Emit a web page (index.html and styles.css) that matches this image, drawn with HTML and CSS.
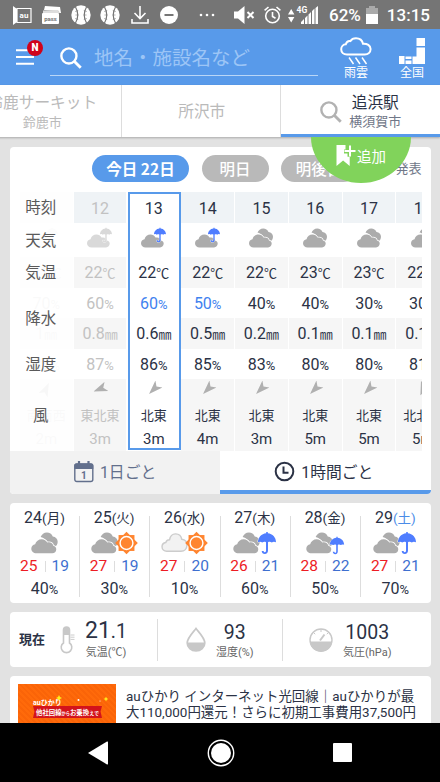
FILE: index.html
```
<!DOCTYPE html>
<html lang="ja">
<head>
    <meta charset="UTF-8">
    <meta name="viewport" content="width=device-width, initial-scale=1.0">
    <title>天気 - 追浜駅</title>
    <link rel="stylesheet" href="styles.css">
</head>
<body>
    <!-- アイコン定義 -->
    <svg class="defs" width="0" height="0">
        <symbol id="cloud" viewBox="0 0 24 20">
            <path d="M4.6 19.4C2 19.4 0 17.6 0 15.2c0-2 1.5-3.7 3.5-4C4.2 8.4 6.6 6.6 9.5 6.6c2.2 0 4 1.2 5 3 .5-.2 1-.2 1.5-.2 2 0 3.6 1.2 4 3 1.6.3 2.7 1.5 2.7 3.2 0 2.2-1.6 3.8-3.6 3.8z"/>
        </symbol>
        <symbol id="clouds" viewBox="0 0 24 20">
            <path d="M8.5 4.6C9.5 2 11.5.4 14.2.4c2.4 0 4.5 1.4 5.3 3.6 2.6.3 4.5 2.2 4.5 4.8 0 2.3-1.2 4-2.6 4.6-1-1.6-2-2.4-3.4-2.8-2-1.4-2.6-1.1-3-1.2-1.5-2.4-3.6-4.2-6.5-4.8z"/>
            <path stroke="#fff" stroke-width="1.4" paint-order="stroke" d="M4.6 19.4C2 19.4 0 17.6 0 15.2c0-2 1.5-3.7 3.5-4C4.2 8.4 6.6 6.6 9.5 6.6c2.2 0 4 1.2 5 3 .5-.2 1-.2 1.5-.2 2 0 3.6 1.2 4 3 1.6.3 2.7 1.5 2.7 3.2 0 2.2-1.6 3.8-3.6 3.8z"/>
        </symbol>
        <symbol id="outline" viewBox="0 0 26 20">
            <path d="M5.5 18C3 18 1 16.200 1 13.700c0-2.200 1.500-3.900 3.600-4.200C5.200 7.800 6.500 6.900 8.200 6.900 8.800 3.600 10.800 1.200 14 1.200c3.200 0 5.500 2 6 5.200 3 .3 5 2.500 5 5.600 0 3.500-2.400 6-5.800 6z"/>
        </symbol>
        <symbol id="umbrella" viewBox="-1 -1 20 24">
            <path d="M8.2 1.3V0h1.6v1.3C14.6 1.7 18 5.5 18 10.2c-1.4-.8-3-.8-4.2.3-1.2-.8-2.6-.9-3.8-.2V18.5c0 2-1.3 3.5-3.200 3.500-1.800 0-3-1.200-3.100-3h1.900c.1.800.5 1.200 1.200 1.200.8 0 1.200-.6 1.200-1.600V10.300c-1.200-.7-2.500-.6-3.800.2-1.200-1.100-2.800-1.100-4.200-.3C0 5.500 3.400 1.700 8.200 1.300z"/>
        </symbol>
        <symbol id="sun" viewBox="-12 -12 24 24">
            <path fill="#ff8530" d="M-8.300-8.300H8.300V8.300H-8.300z"/>
            <path fill="#ff8530" d="M0-11.800 11.800 0 0 11.800-11.800 0z"/>
            <circle r="6.700" fill="#ff8530" stroke="#fff" stroke-width="1.500"/>
        </symbol>
        <symbol id="search" viewBox="0 0 21 21">
            <circle cx="8.500" cy="8.500" r="7.200" fill="none" stroke="currentColor" stroke-width="2.300"/>
            <path d="M13.600 13.600l6.200 6.200" stroke="currentColor" stroke-width="2.800"/>
        </symbol>
        <symbol id="ball" viewBox="0 0 20 20">
            <circle cx="10" cy="10" r="9.700" fill="#fff"/>
            <path d="M4.500 2Q9 10 4.500 18M15.500 2Q11 10 15.500 18" fill="none" stroke="#757575" stroke-width="1.200"/>
            <path d="M4.200 6.500l3-1M4.500 10h3M4.200 13.500l3 1M15.800 6.500l-3-1M15.500 10h-3M15.800 13.500l-3 1" stroke="#757575" stroke-width=".6"/>
        </symbol>
        <symbol id="arrow" viewBox="-7 -7 14 14">
            <path d="M0 7 5-7 0-3.500-5-7z"/>
        </symbol>
    </svg>

    <div class="status-bar">
        <svg class="st-au" width="19" height="19" viewBox="0 0 19 19">
            <path d="M0 0l4 3v13l-4 3z" fill="#fff"/>
            <path d="M4 2.500h14v14H4z" fill="#757575" stroke="#fff" stroke-width="1.200"/>
            <text x="11" y="12" font-size="8" font-weight="700" text-anchor="middle" fill="#fff">au</text>
        </svg>
        <svg class="st-pass" width="20" height="18" viewBox="0 0 20 18">
            <path d="M2 4l1-4 15 1 1 6h-2V5z" fill="#fff"/>
            <path d="M1 4.500l15-.5 2 3H1z" fill="#ddd"/>
            <rect y="7" width="17" height="11" rx="1" fill="#fff"/>
            <text x="8.500" y="14.500" font-size="6" font-weight="700" text-anchor="middle" fill="#757575">pass</text>
        </svg>
        <svg class="st-ball" width="20" height="20"><use href="#ball"/></svg>
        <svg class="st-ball" width="20" height="20"><use href="#ball"/></svg>
        <svg class="st-down" width="18" height="18" viewBox="0 0 18 18" fill="none" stroke="#fff" stroke-width="1.600">
            <path d="M9 0v12M3.500 7L9 12.500 14.500 7M1 13v4h16v-4"/>
        </svg>
        <svg class="st-minus" width="18" height="18" viewBox="0 0 18 18">
            <circle cx="9" cy="9" r="9" fill="#fff"/>
            <path d="M4.500 9h9" stroke="#757575" stroke-width="2"/>
        </svg>
        <svg class="st-more" width="16" height="4" viewBox="0 0 16 4" fill="#fff">
            <circle cx="2" cy="2" r="1.300"/><circle cx="8" cy="2" r="1.300"/><circle cx="14" cy="2" r="1.300"/>
        </svg>
        <svg class="st-mute" width="21" height="18" viewBox="0 0 21 18">
            <path d="M0 5.500h4L10.500 0v18L4 12.500H0z" fill="#fff"/>
            <path d="M13.500 6l6 6M19.500 6l-6 6" stroke="#fff" stroke-width="2"/>
        </svg>
        <svg class="st-alarm" width="17" height="18" viewBox="0 0 17 18" fill="none" stroke="#fff" stroke-width="1.600">
            <circle cx="8.500" cy="10" r="6.800"/>
            <path d="M.6 4.300L4.500 1M16.400 4.300L12.500 1M8.500 6v4.500l3 1.800"/>
        </svg>
        <svg class="st-signal" width="31" height="19" viewBox="0 0 31 19" fill="#fff">
            <path d="M0 8.500L3.200 3l3.200 5.500zM0 11l3.200 5.500L6.400 11z"/>
            <text x="8.500" y="7" font-size="8.500" font-weight="700">4G</text>
            <path d="M13 18v-2l3-3v5zM17 18v-6l2.500-2.500V18zM20.500 18V8.500L23 6v12zM24 18V5l2.500-2.500V18zM27.500 18V2L30 0v18z"/>
        </svg>
        <span class="st-percent">62%</span>
        <svg class="st-battery" width="12" height="18" viewBox="0 0 12 18">
            <path d="M3 0h6v2h3v6H0V2h3z" fill="#aaa"/>
            <path d="M0 8h12v10H0z" fill="#fff"/>
        </svg>
        <span class="st-time">13:15</span>
    </div>

    <header class="app-header">
        <div class="menu-button">
            <svg width="18" height="16" viewBox="0 0 18 16" stroke="#fff" stroke-width="2">
                <path d="M0 1.300h18M0 8h18M0 14.700h18"/>
            </svg>
            <span class="badge">N</span>
        </div>
        <div class="search-box">
            <svg width="22" height="22"><use href="#search"/></svg>
            <span>地名・施設名など</span>
        </div>
        <div class="header-link">
            <svg width="32" height="28" viewBox="0 0 32 28" fill="none" stroke="#fff" stroke-width="2">
                <path d="M7 17.500C3.500 17.500 1.200 15.200 1.200 12.300c0-2.700 2-4.800 4.600-5C6.500 5 8.300 3.800 10.300 4.100 11.600 2 13.500 1.200 16 1.200c3.600 0 6.300 2.200 7 5.500 4-.3 7.600 1.700 7.600 5.400 0 3.200-2.600 5.400-5.800 5.400z"/>
                <path d="M9 20.500l4.500 6.500M15.500 20.500L20 27M22 20.500l4.500 6.500" stroke-width="1.500"/>
            </svg>
            <span>雨雲</span>
        </div>
        <div class="header-link">
            <svg width="28" height="28" viewBox="0 0 28 28" fill="#fff">
                <path d="M18.500 1H27v8h-8.500zM18.500 10.500H27V27H14.500v-7.500h4zM1 19h5.500v8H1zM7.500 19.500h6V22h-6zM7.500 23.500h6V27h-6z"/>
            </svg>
            <span>全国</span>
        </div>
    </header>

    <nav class="place-tabs">
        <div class="place-tab">
            <div class="place-text"><b>鈴鹿サーキット</b><span>鈴鹿市</span></div>
        </div>
        <div class="place-tab">
            <div class="place-text"><b>所沢市</b></div>
        </div>
        <div class="place-tab active">
            <svg width="22" height="22"><use href="#search"/></svg>
            <div class="place-text"><b>追浜駅</b><span>横須賀市</span></div>
            <div class="add-button">
                <svg width="20" height="23" viewBox="0 0 20 23">
                    <path d="M.5 1h9v4.500H8v4h3.500v3.300h2.200V22l-6.600-5.500L.5 22z" fill="#fff"/>
                    <path d="M14 1.500v11M8.500 7h11" stroke="#fff" stroke-width="2"/>
                </svg>
                <span>追加</span>
            </div>
        </div>
    </nav>

    <main>
        <section class="card hourly">
            <div class="day-pills">
                <span class="pill active">今日 22日</span>
                <span class="pill">明日</span>
                <span class="pill">明後日</span>
                <span class="announce">発表</span>
            </div>
            <div class="hour-table">
                <div class="hours" id="hours"></div>
                <div class="row-labels">
                    <span>時刻</span>
                    <span>天気</span>
                    <span>気温</span>
                    <span>降水</span>
                    <span>湿度</span>
                    <span>風</span>
                </div>
            </div>
            <div class="view-switch">
                <div class="view">
                    <svg width="20" height="22" viewBox="0 0 20 22">
                        <rect x=".8" y="3" width="18" height="17.500" rx="2" fill="none" stroke="#626f8c" stroke-width="1.400"/>
                        <path d="M.3 8V4.500a2 2 0 0 1 2-2h15a2 2 0 0 1 2 2V8z" fill="#626f8c"/>
                        <path d="M5 0v4M14.500 0v4" stroke="#626f8c" stroke-width="2.200"/>
                        <text x="9.800" y="18" font-size="10" font-weight="700" text-anchor="middle" fill="#626f8c">1</text>
                    </svg>
                    <span>1日ごと</span>
                </div>
                <div class="view active">
                    <svg width="21" height="21" viewBox="0 0 21 21" fill="none" stroke="#2b3245" stroke-width="2">
                        <circle cx="10.500" cy="10.500" r="8.800"/>
                        <path d="M9.500 5.500v6.200h5"/>
                    </svg>
                    <span>1時間ごと</span>
                </div>
            </div>
        </section>

        <section class="card days" id="days"></section>

        <section class="card current">
            <b class="current-title">現在</b>
            <div class="measure">
                <svg width="15" height="28" viewBox="0 0 15 28">
                    <path d="M3.500 17V4a3 3 0 0 1 6 0v13a5.300 5.300 0 1 1-6 0z" fill="#fff" stroke="#c8c8c8" stroke-width="1.600"/>
                    <path d="M3.500 9V4a3 3 0 0 1 6 0v5z" fill="#c8c8c8"/>
                    <path d="M10.500 9h4M10.500 11.200h4M10.500 13.400h4" stroke="#ccc"/>
                </svg>
                <div class="measure-text"><b class="large">21<i>.1</i></b><span>気温(℃)</span></div>
            </div>
            <div class="measure">
                <svg width="20" height="25" viewBox="0 0 20 25">
                    <path d="M10 1.500C13.500 6 18.800 11 18.800 16a8.800 8 0 0 1-17.600 0C1.200 11 6.500 6 10 1.500z" fill="#fff" stroke="#c8c8c8" stroke-width="1.700"/>
                    <path d="M1.200 15.500h17.600a8.800 8.500 0 0 1-17.600 0z" fill="#c8c8c8"/>
                </svg>
                <div class="measure-text"><b>93</b><span>湿度(%)</span></div>
            </div>
            <div class="measure">
                <svg width="24" height="24" viewBox="0 0 24 24">
                    <circle cx="12" cy="12" r="11" fill="#fff" stroke="#c8c8c8" stroke-width="1.400"/>
                    <path d="M1 13.500h22a11 10.500 0 0 1-22 0z" fill="#c8c8c8"/>
                    <path d="M12 1v3M4.200 4.200l2 2M19.800 4.200l-2 2" stroke="#c8c8c8"/>
                    <path d="M11 12.500l4.500-6" stroke="#c8c8c8" stroke-width="2"/>
                </svg>
                <div class="measure-text"><b>1003</b><span>気圧(hPa)</span></div>
            </div>
        </section>

        <section class="card news">
            <div class="banner">
                <svg width="98" height="38" viewBox="0 0 98 38">
                    <text x="15" y="20.500" font-size="7" font-weight="700" fill="#fff">auひかり</text>
                    <path d="M15 22h69l-1.500 5.500L84 34H15l1.500-6.500z" fill="#d3131b"/>
                    <text x="49.500" y="30.500" font-size="6.400" font-weight="700" fill="#fff" text-anchor="middle">他社回線<tspan font-size="4.200">から</tspan>お乗換<tspan font-size="5">えで</tspan></text>
                    <path d="M41 11l1 2 2 1-2 1-1 2-1-2-2-1 2-1zM88 12.500l.8 1.700 1.700.8-1.700.8-.8 1.700-.8-1.700-1.700-.8 1.700-.8z" fill="#ffee1c"/>
                    <circle cx="60.500" cy="16" r="1" fill="#fff"/><circle cx="82" cy="17" r=".6" fill="#fff"/>
                </svg>
            </div>
            <p>auひかり インターネット光回線｜auひかりが最<br>大110,000円還元！さらに初期工事費用37,500円</p>
        </section>
    </main>

    <footer class="nav-bar">
        <svg width="21" height="24" viewBox="0 0 21 24"><path d="M0 12L19 .6q1-.4 1 .6v21.600q0 1-1 .6z" fill="#fff"/></svg>
        <svg width="28" height="28" viewBox="0 0 28 28">
            <circle cx="14" cy="14" r="12.700" fill="none" stroke="#fff" stroke-width="1.400"/>
            <circle cx="14" cy="14" r="10" fill="#fff"/>
        </svg>
        <svg width="19" height="19"><rect width="19" height="19" rx="1" fill="#fff"/></svg>
    </footer>

    <script>
        // 1時間ごとの予報 (angle は風向きの矢印の角度)
        const hours = [
            { time: 11, icon: 'rain', temp: 21, pop: 70, rain: '1', humidity: 87, angle: 205, wind: '南南西', speed: 2, state: 'past' },
            { time: 12, icon: 'rain', temp: 22, pop: 60, rain: '0.8', humidity: 87, angle: 68, wind: '東北東', speed: 3, state: 'past' },
            { time: 13, icon: 'rain', temp: 22, pop: 60, rain: '0.6', humidity: 86, angle: 45, wind: '北東', speed: 3, state: 'now' },
            { time: 14, icon: 'rain', temp: 22, pop: 50, rain: '0.5', humidity: 85, angle: 45, wind: '北東', speed: 4 },
            { time: 15, icon: 'clouds', temp: 22, pop: 40, rain: '0.2', humidity: 83, angle: 45, wind: '北東', speed: 3 },
            { time: 16, icon: 'clouds', temp: 23, pop: 40, rain: '0.1', humidity: 80, angle: 45, wind: '北東', speed: 5 },
            { time: 17, icon: 'clouds', temp: 23, pop: 30, rain: '0.1', humidity: 80, angle: 45, wind: '北東', speed: 5 },
            { time: 18, icon: 'clouds', temp: 22, pop: 30, rain: '0.1', humidity: 81, angle: 22, wind: '北北東', speed: 5 }
        ];

        const days = [
            { day: 24, week: '月', icons: ['clouds'], max: 25, min: 19, pop: 40 },
            { day: 25, week: '火', icons: ['clouds', 'sun'], max: 27, min: 19, pop: 30 },
            { day: 26, week: '水', icons: ['outline', 'sun'], max: 27, min: 20, pop: 10 },
            { day: 27, week: '木', icons: ['clouds', 'umbrella'], max: 26, min: 21, pop: 60 },
            { day: 28, week: '金', icons: ['clouds', 'umbrella small'], max: 28, min: 22, pop: 50 },
            { day: 29, week: '土', icons: ['clouds', 'umbrella'], max: 27, min: 21, pop: 70 }
        ];

        function icon(name) {
            return `<svg class="icon ${name}"><use href="#${name.split(' ')[0]}"/></svg>`;
        }

        document.getElementById('hours').innerHTML = hours.map(h => `
            <div class="hour ${h.state || ''}">
                <div class="cell time">${h.time}</div>
                <div class="cell weather">${h.icon === 'rain' ? icon('cloud') + icon('umbrella') : icon('clouds')}</div>
                <div class="cell shade">${h.temp}<small>℃</small></div>
                <div class="cell ${h.pop >= 50 ? 'wet' : ''}">${h.pop}<small>%</small></div>
                <div class="cell shade">${h.rain}<small>㎜</small></div>
                <div class="cell">${h.humidity}<small>%</small></div>
                <div class="wind shade">
                    <svg class="arrow" style="transform: rotate(${h.angle}deg)"><use href="#arrow"/></svg>
                    <span class="direction">${h.wind}</span>
                    <span>${h.speed}m</span>
                </div>
            </div>`).join('');

        document.getElementById('days').innerHTML = days.map(d => `
            <div class="day">
                <div class="date">${d.day}<span class="${d.week === '土' ? 'saturday' : ''}">(${d.week})</span></div>
                <div class="day-icons">${d.icons.map(icon).join('')}</div>
                <div class="temps"><span class="max">${d.max}</span><span class="min">${d.min}</span></div>
                <div class="pop">${d.pop}<small>%</small></div>
            </div>`).join('');
    </script>
</body>
</html>
```
FILE: styles.css
```
:root {
    --blue: #589aea;
    --navy: #2b3245;
    --gray: #bababa;
    --page-bg: #e2e2e2;
}
* {
    box-sizing: border-box;
}
body {
    margin: 0;
    height: 782px;
    display: flex;
    flex-direction: column;
    overflow: hidden;
    background: var(--page-bg);
    color: var(--navy);
    font-family: Roboto, "Noto Sans CJK JP", sans-serif;
    font-size: 16px;
    line-height: 1;
}
svg {
    display: block;
    flex: none;
}
.defs {
    position: absolute;
}

/* ステータスバー */
.status-bar {
    flex: none;
    height: 29px;
    background: #757575;
    color: #fff;
    display: flex;
    align-items: center;
    padding: 1px 0 0 13px;
    font-weight: 500;
    font-size: 17px;
}
.st-pass { margin-left: 10px; }
.st-ball { margin-left: 9px; }
.st-down { margin-left: 11px; }
.st-minus { margin-left: 11px; }
.st-more { margin-left: 21px; }
.st-mute { margin-left: 19px; }
.st-alarm { margin-left: 9px; }
.st-signal { margin-left: 7px; }
.st-percent { margin-left: 10px; }
.st-battery { margin-left: 5px; }
.st-time { margin-left: 9px; }

/* ヘッダー */
.app-header {
    flex: none;
    height: 56px;
    background: var(--blue);
    color: #fff;
    display: flex;
    padding-left: 16px;
}
.menu-button {
    position: relative;
    width: 34px;
    padding-top: 20px;
}
.badge {
    position: absolute;
    left: 11px;
    top: 11px;
    width: 16px;
    height: 16px;
    border-radius: 50%;
    background: #d0021b;
    font-size: 10px;
    font-weight: 900;
    line-height: 16px;
    text-align: center;
}
.search-box {
    width: 268px;
    height: 47px;
    border-bottom: 1px solid #b9d6f7;
    display: flex;
    align-items: center;
    gap: 12px;
    padding: 12px 0 0 10px;
}
.search-box span {
    padding-top: 2px;
    font-size: 19.5px;
    color: #9cc5f6;
}
.header-link {
    width: 56px;
    margin-left: 10px;
    padding-top: 8px;
    display: flex;
    flex-direction: column;
    align-items: center;
    gap: 2px;
    font-size: 12px;
}
.header-link + .header-link {
    margin-left: 0;
}

/* 地点タブ */
.place-tabs {
    flex: none;
    height: 52px;
    display: flex;
    margin-left: -38px;
    background: #fff;
    box-shadow: 0 1px 2px rgba(0, 0, 0, 0.25);
    position: relative;
    z-index: 1;
}
.place-tab {
    flex: none;
    width: 159.5px;
    padding: 2px 0 0 2px;
    border-right: 1px solid #ddd;
    display: flex;
    align-items: center;
    justify-content: center;
    color: var(--gray);
}
.place-tab.active {
    position: relative;
    border-right: 0;
    border-bottom: 3px solid var(--blue);
    padding: 4px 0 0;
    gap: 7px;
}
.place-tab.active svg {
    color: #b2b2b2;
}
.place-text {
    display: flex;
    flex-direction: column;
    align-items: center;
    gap: 5px;
    white-space: nowrap;
}
.place-text b {
    font-size: 15.7px;
    font-weight: 400;
}
.place-text span {
    font-size: 13px;
}
.active .place-text b {
    color: var(--navy);
}
.active .place-text span {
    color: #707788;
}
.add-button {
    position: absolute;
    left: 30px;
    top: 52px;
    width: 100px;
    height: 46px;
    border-radius: 0 0 50px 50px / 0 0 46px 46px;
    background: #81d35b;
    color: #fff;
    display: flex;
    justify-content: center;
    gap: 1px;
    padding-top: 7px;
    font-size: 14.5px;
}
.add-button span {
    padding-top: 7px;
}
.place-tab.active .add-button svg {
    color: #fff;
}

main {
    flex: 1;
    min-height: 0;
    overflow: hidden;
    padding: 10px 9.5px 0 10px;
    display: flex;
    flex-direction: column;
    gap: 9px;
}
.card {
    flex: none;
    background: #fff;
    border-radius: 4px;
}

/* 1時間ごとの予報 */
.hourly {
    height: 347px;
    overflow: hidden;
}
.day-pills {
    height: 45px;
    padding: 8px 9px 0 82px;
    display: flex;
    gap: 12.5px;
}
.pill {
    flex: none;
    height: 27px;
    width: 67px;
    border-radius: 14px;
    background: #b9b9b9;
    color: #fff;
    font: 500 15.5px/27px "Noto Sans CJK JP", sans-serif;
    text-align: center;
}
.pill.active {
    width: 97px;
    background: var(--blue);
    font-weight: 700;
}
.pill:nth-child(3) {
    width: 76px;
}
.announce {
    margin-left: auto;
    padding-top: 7px;
    color: #707788;
    font-size: 13px;
}
.hour-table {
    position: relative;
    height: 258.5px;
    margin: 0 8.5px 0 10px;
    overflow: hidden;
}
.hours {
    display: flex;
    gap: 1.2px;
}
.hour {
    flex: none;
    width: 52.6px;
    font-size: 16px;
}
.hour.past {
    color: #c2c2c2;
}
.hour.now {
    position: relative;
}
.hour.now::after {
    content: "";
    position: absolute;
    inset: 0 -1px 1px 0;
    border: 2px solid var(--blue);
}
.cell {
    height: 30.6px;
    display: flex;
    align-items: baseline;
    justify-content: center;
    line-height: 32px;
    white-space: nowrap;
}
.cell small,
.pop small {
    font-size: 13px;
}
.shade {
    background: #f6f6f6;
}
.time {
    background: #eff3f6;
    line-height: 33px;
}
.now .shade,
.now .time {
    background: #fff;
}
.wet {
    color: #3f82ef;
}
.past .wet {
    color: inherit;
}
.weather {
    height: 34.5px;
    align-items: flex-start;
    padding-top: 5px;
}
.icon {
    width: 24px;
    height: 20px;
    fill: #acacac;
}
.icon.umbrella {
    width: 20px;
    height: 24px;
    fill: #4f7dff;
    stroke: #fff;
    stroke-width: 1;
    paint-order: stroke;
}
.weather .umbrella {
    width: 14px;
    height: 16px;
    margin: -1px 0 0 -12px;
}
.past .icon,
.past .icon.umbrella {
    fill: #d9d9d9;
}
.wind {
    height: 72px;
    display: flex;
    flex-direction: column;
    align-items: center;
    padding-top: 3px;
}
.arrow {
    width: 14px;
    height: 14px;
    fill: #b0b0b0;
}
.direction {
    font-size: 13px;
    margin: 13px 0 10px;
    white-space: nowrap;
}
.wind span:last-child {
    font-size: 15px;
}
.row-labels {
    position: absolute;
    left: 0;
    top: 0;
    width: 53.5px;
    height: 100%;
    padding: 2px 12px 0 0;
    background: rgba(255, 255, 255, 0.9);
    color: #5a5a5a;
    display: grid;
    grid-template-rows: 30px 35px 30px 61px 31px 71px;
    align-items: center;
    justify-items: center;
    font-size: 15.5px;
}
.view-switch {
    height: 43.5px;
    display: flex;
    font-size: 15.8px;
}
.view {
    width: 50%;
    background: #f2f2f2;
    color: #626f8c;
    display: flex;
    align-items: center;
    justify-content: center;
    gap: 6px;
}
.view span {
    padding-top: 2px;
}
.view.active {
    background: #fff;
    color: var(--navy);
    border-bottom: 4px solid var(--blue);
    padding: 3px 3px 0 0;
}

/* 週間予報 */
.days {
    height: 100px;
    display: grid;
    grid-template-columns: 69px repeat(5, 1fr);
    padding: 13px 0 11px;
}
.day {
    display: flex;
    flex-direction: column;
    align-items: center;
    margin-top: -6px;
}
.day + .day {
    position: relative;
}
.day + .day::before {
    content: "";
    position: absolute;
    left: 0;
    top: 6px;
    bottom: 0;
    width: 1px;
    background: #ddd;
}
.date {
    height: 20px;
    font-size: 16px;
    white-space: nowrap;
}
.date span {
    font-size: 13.5px;
}
.saturday {
    color: #4b8ce8;
}
.day-icons {
    height: 26px;
    display: flex;
    align-items: center;
}
.day-icons .icon {
    width: 27px;
    height: 22px;
}
.day-icons .sun {
    width: 23px;
    height: 24px;
    margin-left: -3px;
}
.day-icons .umbrella {
    width: 20px;
    height: 24px;
    margin-left: -3px;
}
.day-icons .umbrella.small {
    width: 16px;
    height: 19px;
    margin: 4px 0 0 -4px;
}
.day-icons .outline {
    fill: #f2f2f2;
    stroke: #ccc;
    stroke-width: 1.4;
    overflow: visible;
}
.temps {
    height: 21px;
    padding-top: 3px;
    display: flex;
    font-size: 15.5px;
}
.max {
    color: #ed1c24;
    padding-right: 7px;
    height: 15px;
}
.min {
    color: #3e6fd0;
    padding-left: 7px;
    height: 15px;
    background: linear-gradient(#ddd, #ddd) 0 50% / 1px 11px no-repeat;
}
.pop {
    padding-top: 4px;
}

/* 現在の観測値 */
.current {
    height: 55px;
    display: grid;
    grid-template-columns: 41px 106px 125px 1fr;
    align-items: center;
}
.current-title {
    padding-left: 9px;
    font-size: 13px;
    white-space: nowrap;
}
.measure {
    height: 42px;
    display: flex;
    align-items: center;
    padding-left: 9px;
    gap: 10px;
}
.measure + .measure {
    border-left: 1px solid #ddd;
    padding-left: 28px;
}
.measure:last-child {
    padding-left: 26px;
}
.measure-text {
    display: flex;
    flex-direction: column;
    align-items: center;
    gap: 5px;
    padding-top: 2px;
    white-space: nowrap;
}
.measure-text b {
    font-size: 19.5px;
    font-weight: 400;
}
.measure-text .large {
    font-size: 23px;
    margin-top: -4px;
}
.measure-text i {
    font-size: 19.5px;
    font-style: normal;
}
.measure-text span {
    font-size: 11px;
    color: #666;
}

/* お知らせ */
.news {
    height: 90px;
    display: flex;
    padding: 8px 0 0 8px;
    gap: 10px;
}
.banner {
    flex: none;
    width: 98px;
    background: repeating-linear-gradient(45deg, #ff6a0a 0 2px, #fa6408 2px 4px);
}
.news p {
    margin: 5px 0 0;
    font-size: 13.45px;
    line-height: 16px;
    white-space: nowrap;
}

/* ナビゲーションバー */
.nav-bar {
    flex: none;
    height: 59px;
    background: #000;
    display: flex;
    align-items: center;
    justify-content: space-between;
    padding: 0 88.5px 0 88px;
}
```
